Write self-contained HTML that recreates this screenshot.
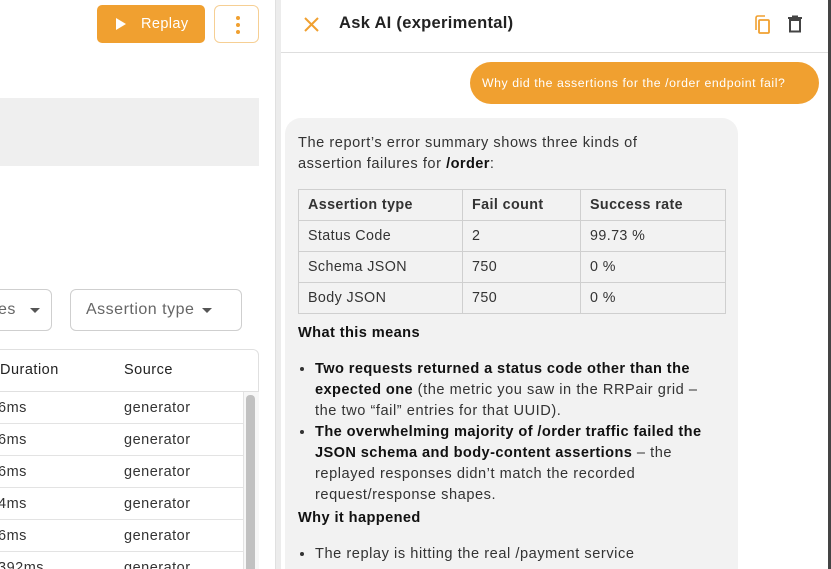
<!DOCTYPE html>
<html><head><style>
*{box-sizing:border-box;margin:0;padding:0}
html,body{width:831px;height:569px;overflow:hidden}
body{background:#fff;font-family:"Liberation Sans",sans-serif;color:#222;position:relative}
.abs{position:absolute}
.btn{left:97px;top:5px;width:108px;height:38px;background:#f0a030;border-radius:5px;color:#fff;font-size:14.5px;display:flex;align-items:center;padding-left:18px;letter-spacing:0.4px}
.menu{left:214px;top:5px;width:45px;height:38px;border:1px solid #f6cf94;border-radius:6px}
.dot{position:absolute;left:21px;width:4px;height:4px;border-radius:50%;background:#f0a030}
.sel{top:289px;height:42px;border:1px solid #cfcfcf;border-radius:6px;font-size:16px;color:#666;display:flex;align-items:center;letter-spacing:0.5px}
.tri{width:0;height:0;border-left:5px solid transparent;border-right:5px solid transparent;border-top:5px solid #555;display:inline-block}
.lrow{position:absolute;left:0;width:243px;height:32px;border-bottom:1px solid #e3e3e3;font-size:14.5px;color:#333;letter-spacing:0.5px}
.lrow span{position:absolute;top:8px}
table{border-collapse:collapse;font-size:14.3px;letter-spacing:0.4px}
td,th{border:1px solid #cfcfcf;height:31px;padding:0 9px;text-align:left}
th{font-weight:bold}
.ai{left:285px;top:118px;width:453px;height:470px;background:#f2f2f2;border-radius:16px;padding:13px 13px;font-size:14.6px;line-height:21px;color:#333;letter-spacing:0.55px;white-space:nowrap}
.ai b{color:#111;letter-spacing:0.4px}
ul{padding-left:17px;margin:0}
</style></head><body>
<div class="abs btn"><svg width="12" height="14" viewBox="0 0 12 14"><path d="M1 1 L11 7 L1 13 Z" fill="#fff"/></svg><span style="margin-left:14px">Replay</span></div>
<div class="abs menu"><div class="dot" style="top:10px"></div><div class="dot" style="top:17px"></div><div class="dot" style="top:24px"></div></div>
<div class="abs" style="left:0;top:98px;width:259px;height:68px;background:#efefef"></div>
<div class="abs sel" style="left:-20px;width:72px;padding-left:17px">es<span class="tri" style="margin-left:14px"></span></div>
<div class="abs sel" style="left:70px;width:172px;padding-left:15px">Assertion type<span class="tri" style="margin-left:8px"></span></div>
<div class="abs" style="left:-10px;top:349px;width:269px;height:230px;border:1px solid #e0e0e0;border-radius:6px"></div>
<div class="abs" style="left:0;top:362px;font-size:14.5px;color:#222;letter-spacing:0.5px">Duration</div>
<div class="abs" style="left:124px;top:362px;font-size:14.5px;color:#222;letter-spacing:0.5px">Source</div>
<div class="abs" style="left:0;top:391px;width:259px;border-top:1px solid #e0e0e0"></div>
<div class="lrow" style="top:392px"><span style="left:-2px">6ms</span><span style="left:124px">generator</span></div>
<div class="lrow" style="top:424px"><span style="left:-2px">6ms</span><span style="left:124px">generator</span></div>
<div class="lrow" style="top:456px"><span style="left:-2px">6ms</span><span style="left:124px">generator</span></div>
<div class="lrow" style="top:488px"><span style="left:-2px">4ms</span><span style="left:124px">generator</span></div>
<div class="lrow" style="top:520px"><span style="left:-2px">6ms</span><span style="left:124px">generator</span></div>
<div class="lrow" style="top:552px"><span style="left:-2px">392ms</span><span style="left:124px">generator</span></div>
<div class="abs" style="left:243px;top:392px;width:16px;height:180px;background:#f7f7f7;border-left:1px solid #e3e3e3"></div>
<div class="abs" style="left:246px;top:395px;width:9px;height:180px;background:#c1c1c1;border-radius:4px"></div>
<div class="abs" style="left:275px;top:0;width:6px;height:569px;background:#ececec;border-left:1px solid #e0e0e0"></div>
<div class="abs" style="left:828px;top:0;width:3px;height:569px;background:#444"></div>
<div class="abs" style="left:281px;top:52px;width:547px;border-top:1px solid #dedede"></div>
<svg class="abs" style="left:303px;top:16px" width="17" height="17" viewBox="0 0 17 17"><path d="M2 2 L15 15 M15 2 L2 15" stroke="#f0a030" stroke-width="2"/></svg>
<div class="abs" style="left:339px;top:14px;font-size:16.5px;font-weight:bold;color:#222;letter-spacing:0.3px">Ask AI (experimental)</div>
<svg class="abs" style="left:754px;top:15px" width="18" height="20" viewBox="0 0 18 20"><path d="M2 3 V15" stroke="#f0a030" stroke-width="1.6" fill="none"/><rect x="5" y="5" width="10" height="13" rx="1" stroke="#f0a030" stroke-width="1.8" fill="none"/><path d="M2 3 Q2 1 4 1 H11" stroke="#f0a030" stroke-width="1.6" fill="none"/></svg>
<svg class="abs" style="left:787px;top:15px" width="16" height="18" viewBox="0 0 16 18"><path d="M1 3 H15 M5 1.5 H11" stroke="#444" stroke-width="2"/><rect x="3" y="5" width="10" height="11.5" stroke="#444" stroke-width="2" fill="none"/></svg>
<div class="abs" style="left:470px;top:62px;width:349px;height:42px;background:#f0a030;border-radius:21px;color:#fff;font-size:12.3px;display:flex;align-items:center;padding-left:12px;white-space:nowrap;letter-spacing:0.55px">Why did the assertions for the /order endpoint fail?</div>
<div class="abs ai">
<div style="padding-top:2px">The report’s error summary shows three kinds of<br>assertion failures for <b>/order</b>:</div>
<table style="margin-top:14px;width:428px">
<tr><th style="width:164px">Assertion type</th><th style="width:118px">Fail count</th><th>Success rate</th></tr>
<tr><td>Status Code</td><td>2</td><td>99.73 %</td></tr>
<tr><td>Schema JSON</td><td>750</td><td>0 %</td></tr>
<tr><td>Body JSON</td><td>750</td><td>0 %</td></tr>
</table>
<div style="margin-top:9px"><b>What this means</b></div>
<ul style="margin-top:15px">
<li><b>Two requests returned a status code other than the</b><br><b>expected one</b> (the metric you saw in the RRPair grid –<br>the two “fail” entries for that UUID).</li>
<li><b>The overwhelming majority of /order traffic failed the</b><br><b>JSON schema and body-content assertions</b> – the<br>replayed responses didn’t match the recorded<br>request/response shapes.</li>
</ul>
<div style="margin-top:2px"><b>Why it happened</b></div>
<ul style="margin-top:15px"><li>The replay is hitting the real /payment service</li></ul>
</div>
</body></html>
